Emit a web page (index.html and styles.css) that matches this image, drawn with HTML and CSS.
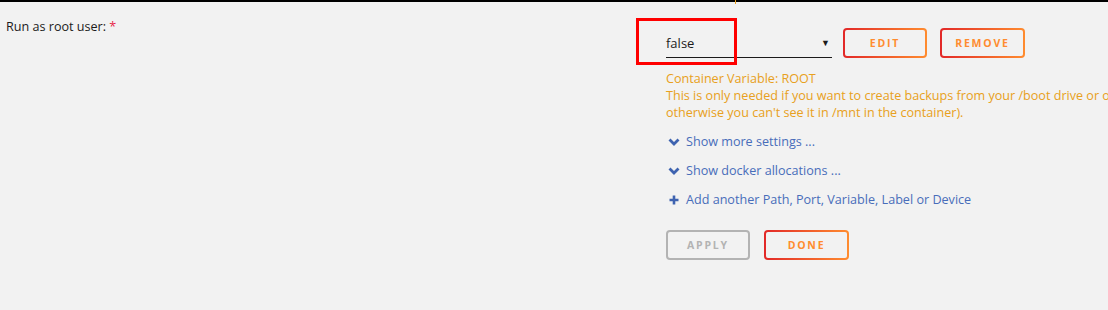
FILE: index.html
```html
<!DOCTYPE html>
<html lang="en">
<head>
    <meta charset="UTF-8">
    <title>Run as root user</title>
    <link rel="stylesheet" href="styles.css">
</head>
<body>
    <div class="topbar"><span class="tick"></span></div>
    <div class="setting">
        <div class="label">Run as root user: <span class="required">*</span></div>
        <div class="value">
            <div class="control-row">
                <div class="select">
                    <span>false</span>
                    <span class="caret">&#9660;</span>
                </div>
                <button class="btn">Edit</button>
                <button class="btn">Remove</button>
            </div>
            <div class="help">
                Container Variable: ROOT<br>
                This is only needed if you want to create backups from your /boot drive or other devices (if they are not mounted,<br>
                otherwise you can't see it in /mnt in the container).
            </div>
            <div class="links">
                <a class="link" href="#">
                    <svg class="icon" viewBox="0 0 12 12"><path d="M1.5 3.5 L6 8 L10.5 3.5" fill="none" stroke="currentColor" stroke-width="2.8"/></svg>
                    Show more settings ...
                </a>
                <a class="link" href="#">
                    <svg class="icon" viewBox="0 0 12 12"><path d="M1.5 3.5 L6 8 L10.5 3.5" fill="none" stroke="currentColor" stroke-width="2.8"/></svg>
                    Show docker allocations ...
                </a>
                <a class="link" href="#">
                    <svg class="icon" viewBox="0 0 12 12"><path d="M6 1.5 V10.5 M1.5 6 H10.5" fill="none" stroke="currentColor" stroke-width="2.6"/></svg>
                    Add another Path, Port, Variable, Label or Device
                </a>
            </div>
            <div class="actions">
                <button class="btn disabled">Apply</button>
                <button class="btn">Done</button>
            </div>
        </div>
        <div class="highlight"></div>
    </div>
</body>
</html>
```

FILE: styles.css
```css
html, body {
    margin: 0;
    padding: 0;
    background: #f2f2f2;
    overflow: hidden;
}
body {
    width: 1108px;
    height: 310px;
    font-family: "Open Sans", sans-serif;
    font-size: 12.6px;
    color: #1c1b1b;
}
.topbar {
    height: 2px;
    background: #000;
    position: relative;
}
.tick {
    position: absolute;
    left: 735px;
    top: 0;
    width: 1px;
    height: 4px;
    background: #e8a020;
}
.setting {
    display: flex;
    position: relative;
    padding-top: 16px;
}
.label {
    width: 660px;
    padding-left: 6px;
    line-height: 17px;
    flex-shrink: 0;
}
.required {
    color: #e8284a;
}
.value {
    padding-top: 10px;
    white-space: nowrap;
}
.control-row {
    display: flex;
    align-items: center;
    gap: 11px;
}
.select {
    width: 166px;
    height: 29px;
    box-sizing: border-box;
    border-bottom: 1px solid #1c1b1b;
    display: flex;
    align-items: center;
    justify-content: space-between;
    font-size: 13px;
}
.caret {
    font-size: 9px;
    margin-right: 2px;
}
.btn {
    width: 84px;
    height: 30px;
    padding: 0;
    font-family: inherit;
    font-size: 10.5px;
    font-weight: bold;
    letter-spacing: 1.8px;
    text-transform: uppercase;
    color: #ff8c2f;
    border: 2px solid transparent;
    border-radius: 4px;
    background:
        linear-gradient(#f2f2f2, #f2f2f2) padding-box,
        linear-gradient(90deg, #e22828, #ff8c2f) border-box;
    cursor: pointer;
}
.control-row .btn:last-child {
    width: 85px;
    margin-left: 2px;
}
.btn.disabled {
    color: #b3b3b3;
    background: #f2f2f2;
    border-color: #b3b3b3;
    cursor: default;
}
.actions .btn:last-child {
    width: 85px;
}
.help {
    margin-top: 12px;
    color: #e8a020;
    line-height: 17px;
}
.links {
    margin-top: 6px;
}
.link {
    display: flex;
    align-items: center;
    gap: 6px;
    height: 29px;
    color: #486dba;
    text-decoration: none;
}
.icon {
    width: 12px;
    height: 12px;
    margin-left: 2px;
    color: #3e63b0;
}
.actions {
    display: flex;
    gap: 14px;
    margin-top: 16px;
}
.highlight {
    position: absolute;
    left: 636px;
    top: 16px;
    width: 95px;
    height: 41px;
    border: 3px solid #ff0000;
}
```
